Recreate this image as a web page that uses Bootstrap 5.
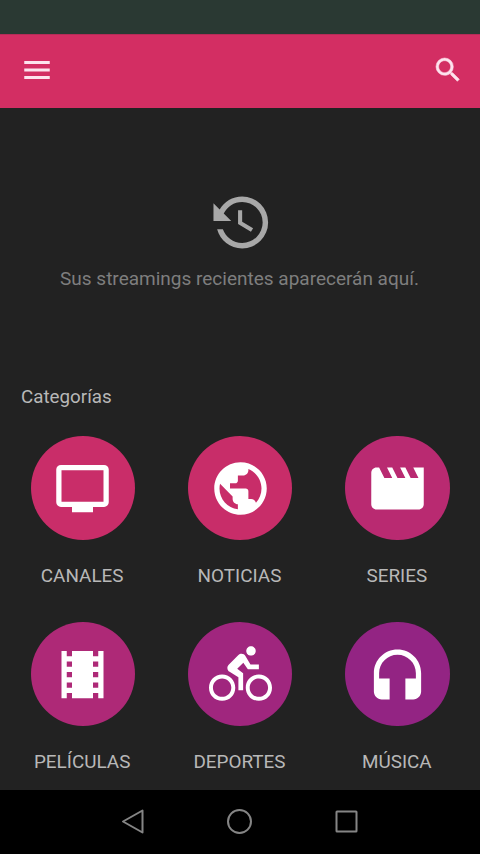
<!DOCTYPE html>
<html lang="es">
<head>
<meta charset="utf-8">
<meta name="viewport" content="width=device-width, initial-scale=1">
<title>Categorías</title>
<link href="https://cdn.jsdelivr.net/npm/bootstrap@5.3.0/dist/css/bootstrap.min.css" rel="stylesheet">
<style>
  body { background: #222; color: #b8b8b8; font-family: Roboto, "Liberation Sans", sans-serif; font-size: 18.9px; line-height: 24px; }
  svg { display: block; flex: none; }
  .screen { height: 854px; overflow: hidden; }
  .status-strip { height: 34px; background: #2a3933; }
  .app-bar { height: 74px; background: #d32e63; padding: 0 16px 3px 20px; border-top: 1px solid #b52c58; }
  .app-bar svg { fill: #fde3ee; }
  .bar-btn { border: 0; padding: 0; background: none; }
  .recent { height: 263px; padding-top: 83px; color: #7e7e7e; }
  .recent svg { fill: #a8a8a8; margin-left: 1px; }
  .recent p { margin-top: 10.400px; font-size: 19px; white-space: nowrap; margin-right: 1px; }
  .section-title { font-size: 18.8px; line-height: 24px; padding-left: 21px; margin-top: 14px; }
  .cat-grid { margin: 27px 4px 0; row-gap: 34px; }
  .cat { height: 152px; }
  .cat span { margin-right: 1px; }
  .disc { width: 104.400px; height: 104.400px; margin: 0 0 23.600px .6px; }
  .disc svg { fill: #fff; }
  .c1 { background: #c92d69; } .c2 { background: #c82d69; } .c3 { background: #b92a71; }
  .c4 { background: #ae2977; } .c5 { background: #a0267e; } .c6 { background: #932483; }
  .sys-nav { height: 64px; background: #000; gap: 80px; padding: 0 1px 1px 0; }
  .sys-nav svg { fill: none; stroke: #858585; stroke-width: 2; stroke-linejoin: round; }
</style>
<script src="https://cdn.jsdelivr.net/npm/bootstrap@5.3.0/dist/js/bootstrap.bundle.min.js"></script>
</head>
<body>
<div class="screen d-flex flex-column">
  <div class="status-strip flex-shrink-0"></div>
  <header class="app-bar d-flex align-items-center justify-content-between flex-shrink-0">
    <button class="bar-btn" aria-label="Menú"><svg width="34" height="34" viewBox="0 0 24 24"><path d="M3 18.3h18v-2.1H3zM3 13h18v-2H3zM3 5.7v2.1h18V5.7z"/></svg></button>
    <button class="bar-btn" aria-label="Buscar"><svg width="32" height="32" viewBox="0 0 24 24"><path stroke="#fde3ee" stroke-width=".4" d="M15.5 14h-.79l-.28-.27A6.471 6.471 0 0 0 16 9.5 6.5 6.5 0 1 0 9.5 16c1.61 0 3.09-.59 4.23-1.57l.27.28v.79l5 4.99L20.49 19l-4.99-5zm-6 0C7.01 14 5 11.99 5 9.5S7.01 5 9.5 5 14 7.01 14 9.5 11.99 14 9.5 14z"/></svg></button>
  </header>
  <main class="flex-grow-1">
    <section class="recent d-flex flex-column align-items-center">
      <svg width="65.6" height="65.6" viewBox="0 0 24 24"><path d="M11 7v5.11l4.71 2.79.79-1.28-4-2.37V7zM12.5 2C8.97 2 5.91 3.92 4.27 6.77L2 4.5V11h6.5L5.75 8.25C6.96 5.73 9.5 4 12.5 4a7.5 7.5 0 0 1 0 15c-3.27 0-6.03-2.09-7.06-5h-2.1c1.1 4.03 4.77 7 9.16 7a9.5 9.5 0 0 0 0-19z"/></svg>
      <p class="mb-0">Sus streamings recientes aparecerán aquí.</p>
    </section>
    <h2 class="section-title mb-0 fw-normal">Categorías</h2>
    <div class="cat-grid row gx-0">
      <div class="cat col-4 d-flex flex-column align-items-center">
        <div class="disc c1 rounded-circle d-flex align-items-center justify-content-center"><svg width="63" height="63" viewBox="0 0 24 24"><path d="M20.2 3H3.8A1.8 1.8 0 0 0 2 4.8v12.4A1.8 1.8 0 0 0 3.8 19H8v2h8v-2h4.200a1.8 1.8 0 0 0 1.8-1.8V4.800A1.800 1.800 0 0 0 20.200 3zM20 17H4V5h16z"/></svg></div>
        <span>CANALES</span>
      </div>
      <div class="cat col-4 d-flex flex-column align-items-center">
        <div class="disc c2 rounded-circle d-flex align-items-center justify-content-center"><svg width="63" height="63" viewBox="0 0 24 24"><path d="M12 2C6.48 2 2 6.48 2 12s4.480 10 10 10 10-4.480 10-10S17.520 2 12 2zm-1 17.930c-3.950-.49-7-3.850-7-7.930 0-.62.08-1.210.21-1.790L9 15v1c0 1.100.9 2 2 2v1.930zm6.900-2.540c-.26-.81-1-1.390-1.900-1.390h-1v-3c0-.55-.45-1-1-1H8v-2h2c.55 0 1-.45 1-1V7h2c1.100 0 2-.9 2-2v-.41c2.930 1.190 5 4.060 5 7.410 0 2.080-.8 3.970-2.100 5.390z"/></svg></div>
        <span>NOTICIAS</span>
      </div>
      <div class="cat col-4 d-flex flex-column align-items-center">
        <div class="disc c3 rounded-circle d-flex align-items-center justify-content-center"><svg width="63" height="63" viewBox="0 0 24 24"><path d="M18 4l2 4h-3l-2-4h-2l2 4h-3l-2-4H8l2 4H7L5 4H4c-1.100 0-1.990.9-1.990 2L2 18c0 1.100.9 2 2 2h16c1.100 0 2-.9 2-2V4h-4z"/></svg></div>
        <span>SERIES</span>
      </div>
      <div class="cat col-4 d-flex flex-column align-items-center">
        <div class="disc c4 rounded-circle d-flex align-items-center justify-content-center"><svg width="63" height="63" viewBox="0 0 24 24"><path d="M18 3v2h-2V3H8v2H6V3H4v18h2v-2h2v2h8v-2h2v2h2V3h-2zM8 17H6v-2h2v2zm0-4H6v-2h2v2zm0-4H6V7h2v2zm10 8h-2v-2h2v2zm0-4h-2v-2h2v2zm0-4h-2V7h2v2z"/></svg></div>
        <span>PELÍCULAS</span>
      </div>
      <div class="cat col-4 d-flex flex-column align-items-center">
        <div class="disc c5 rounded-circle d-flex align-items-center justify-content-center"><svg width="63" height="63" viewBox="0 0 24 24"><path d="M16 4.800c.99 0 1.800-.81 1.800-1.800s-.81-1.800-1.800-1.800c-1 0-1.800.81-1.800 1.800S15 4.800 16 4.800zM19 12c-2.800 0-5 2.200-5 5s2.200 5 5 5 5-2.200 5-5-2.200-5-5-5zm0 8.500c-1.930 0-3.500-1.570-3.500-3.500s1.570-3.500 3.500-3.500 3.500 1.570 3.500 3.500-1.570 3.500-3.500 3.500zM14.800 10H19V8.200h-3.200l-1.930-3.270c-.3-.5-.84-.83-1.460-.83-.47 0-.89.19-1.200.5l-3.700 3.700c-.32.3-.51.73-.51 1.200 0 .63.33 1.160.85 1.470L11.200 13v5H13v-6.480l-2.250-1.670 2.320-2.330L14.800 10zM5 12c-2.800 0-5 2.200-5 5s2.200 5 5 5 5-2.200 5-5-2.200-5-5-5zm0 8.500c-1.930 0-3.500-1.570-3.500-3.500s1.570-3.500 3.500-3.500 3.500 1.570 3.500 3.500-1.570 3.500-3.500 3.500z"/></svg></div>
        <span>DEPORTES</span>
      </div>
      <div class="cat col-4 d-flex flex-column align-items-center">
        <div class="disc c6 rounded-circle d-flex align-items-center justify-content-center"><svg width="63" height="63" viewBox="0 -1.5 24 24"><path d="M12 1c-4.970 0-9 4.030-9 9v7c0 1.660 1.340 3 3 3h3v-8H5v-2c0-3.870 3.130-7 7-7s7 3.130 7 7v2h-4v8h3c1.660 0 3-1.340 3-3v-7c0-4.970-4.030-9-9-9z"/></svg></div>
        <span>MÚSICA</span>
      </div>
    </div>
  </main>
  <nav class="sys-nav d-flex align-items-center justify-content-center flex-shrink-0">
    <svg width="27" height="27" viewBox="0 0 27 27"><path d="M23.500 2.500v22L4 13.500z"/></svg>
    <svg width="27" height="27" viewBox="0 0 27 27"><circle cx="13.500" cy="13.500" r="11.500"/></svg>
    <svg width="27" height="27" viewBox="0 0 27 27"><rect x="3.500" y="3.500" width="20" height="20" rx=".5"/></svg>
  </nav>
</div>
</body>
</html>
